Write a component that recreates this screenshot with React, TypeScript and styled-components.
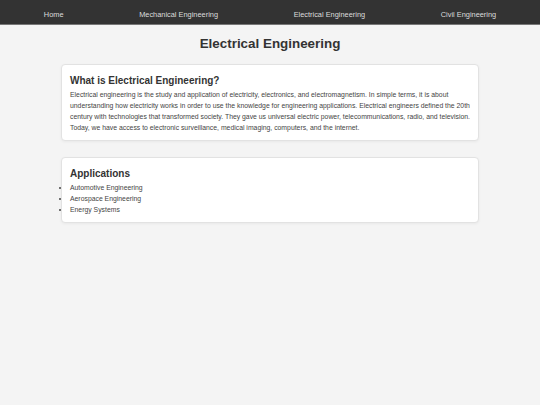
import React from "react";
import styled, { createGlobalStyle } from "styled-components";

const GlobalStyle = createGlobalStyle`
    html, body {
        margin: 0;
        padding: 0;
        background: #f4f4f4;
        font-family: "Liberation Sans", Arial, sans-serif;
        color: #333;
    }
`;

const Nav = styled.nav`
    background: #333;
    border-bottom: 1px solid #777;
    height: 24px;
`;

const NavList = styled.ul`
    list-style: none;
    margin: 0;
    padding: 0 6px;
    height: 100%;
    display: flex;
    align-items: center;
    justify-content: space-around;
`;

const NavLink = styled.a`
    color: #ddd;
    font-size: 7.4px;
    font-weight: 400;
    text-decoration: none;
`;

const Main = styled.main`
    max-width: 418px;
    margin: 0 auto;
    padding-top: 11px;
`;

const Title = styled.h1`
    font-size: 13.4px;
    line-height: 16px;
    font-weight: 700;
    text-align: center;
    color: #333;
    margin: 0 0 12px;
`;

const Card = styled.section`
    background: #fff;
    border: 1px solid #e2e2e2;
    border-radius: 4px;
    box-shadow: 0 1px 3px rgba(0, 0, 0, 0.05);
    padding: 9px 8px 7px;
    margin-bottom: 16px;
`;

const CardTitle = styled.h2`
    font-size: 10px;
    line-height: 12px;
    font-weight: 700;
    color: #333;
    margin: 1px 0 2px;
`;

const Text = styled.p`
    font-size: 6.85px;
    line-height: 11px;
    color: #444;
    margin: 0;
`;

const List = styled.ul`
    margin: 0;
    padding: 0;
    font-size: 6.85px;
    line-height: 11px;
    color: #444;
`;

const links = ["Home", "Mechanical Engineering", "Electrical Engineering", "Civil Engineering"];
const apps = ["Automotive Engineering", "Aerospace Engineering", "Energy Systems"];

const App = () => (
    <>
        <GlobalStyle />
        <Nav>
            <NavList>
                {links.map((l) => (
                    <li key={l}>
                        <NavLink href="#">{l}</NavLink>
                    </li>
                ))}
            </NavList>
        </Nav>
        <Main>
            <Title>Electrical Engineering</Title>
            <Card>
                <CardTitle>What is Electrical Engineering?</CardTitle>
                <Text>
                    Electrical engineering is the study and application of electricity, electronics, and
                    electromagnetism. In simple terms, it is about understanding how electricity works in order to
                    use the knowledge for engineering applications. Electrical engineers defined the 20th century
                    with technologies that transformed society. They gave us universal electric power,
                    telecommunications, radio, and television. Today, we have access to electronic surveillance,
                    medical imaging, computers, and the internet.
                </Text>
            </Card>
            <Card>
                <CardTitle>Applications</CardTitle>
                <List>
                    {apps.map((a) => (
                        <li key={a}>{a}</li>
                    ))}
                </List>
            </Card>
        </Main>
    </>
);

export default App;
